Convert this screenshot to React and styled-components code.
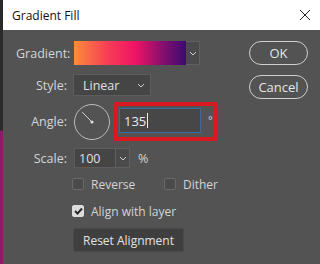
import styled, { createGlobalStyle } from "styled-components";

const Global = createGlobalStyle`
  html, body {
    margin: 0;
    padding: 0;
    background: #2b2b2b;
    font-family: "Open Sans", "Noto Sans", sans-serif;
  }
`;

const Page = styled.div`
  display: flex;
  width: 320px;
  height: 264px;
  overflow: hidden;
`;

const Strip = styled.div`
  width: 3px;
  flex-shrink: 0;
  background: linear-gradient(#2a2a2a 0, #2a2a2a 130px, #8a1a6a 131px, #8a1a6a 100%);
`;

const Dialog = styled.div`
  flex: 1;
  display: flex;
  flex-direction: column;
  background: #535353;
`;

const TitleBar = styled.div`
  height: 30px;
  background: #ffffff;
  display: flex;
  align-items: center;
  justify-content: space-between;
  padding: 0 9px 0 9px;
  color: #111;
  font-size: 12px;
`;

const Body = styled.div`
  display: flex;
  padding: 11px 12px 0 13px;
`;

const Form = styled.div`
  flex: 1;
  display: flex;
  flex-direction: column;
`;

const Row = styled.div`
  display: flex;
  align-items: center;
  height: ${(p) => p.$h}px;
  margin-top: ${(p) => p.$mt || 0}px;
`;

const Label = styled.span`
  width: 51px;
  flex-shrink: 0;
  margin-right: 6px;
  text-align: right;
  color: #d4d4d4;
  font-size: 12.5px;
`;

const Indent = styled.div`
  width: 56px;
  flex-shrink: 0;
`;

const Swatch = styled.div`
  width: 112px;
  height: 24px;
  margin-left: 1px;
  background: linear-gradient(90deg, #fb8d3b 0%, #f73d55 30%, #ee1365 55%, #8b0f6d 78%, #3b0a72 100%);
`;

const ArrowBox = styled.div`
  width: ${(p) => p.$w || 14}px;
  height: 100%;
  box-sizing: border-box;
  display: flex;
  align-items: center;
  justify-content: center;
  background: #4a4a4a;
  border: 1px solid #5f5f5f;
  border-left: ${(p) => (p.$split ? "1px solid #5f5f5f" : "none")};
`;

const Select = styled.div`
  width: 78px;
  height: 22px;
  box-sizing: border-box;
  display: flex;
  align-items: center;
  justify-content: space-between;
  padding: 0 5px 0 9px;
  background: #454545;
  border: 1px solid #5c5c5c;
  color: #e0e0e0;
  font-size: 12.5px;
`;

const Dial = styled.div`
  width: 36px;
  height: 36px;
  margin-left: 1px;
  flex-shrink: 0;
`;

const Highlight = styled.div`
  margin-left: 4px;
  display: flex;
  align-items: flex-start;
  box-sizing: border-box;
  width: 103px;
  height: 39px;
  border: 4px solid #d8191f;
  padding: 2px 0 0 1px;
`;

const AngleInput = styled.div`
  width: 82px;
  height: 25px;
  box-sizing: border-box;
  border: 1px solid #3d6a9e;
  background: #474747;
  display: flex;
  align-items: center;
  padding-left: 4px;
  color: #ececec;
  font-size: 13px;
`;

const Caret = styled.span`
  display: inline-block;
  width: 1px;
  height: 15px;
  background: #ececec;
  margin-left: 1px;
`;

const Degree = styled.span`
  margin: 4px 0 0 7px;
  color: #d4d4d4;
  font-size: 11px;
`;

const Combo = styled.div`
  display: flex;
  height: 20px;
  margin-left: 1px;
`;

const ComboText = styled.div`
  width: 41px;
  box-sizing: border-box;
  background: #454545;
  border: 1px solid #5c5c5c;
  border-right: none;
  display: flex;
  align-items: center;
  padding-left: 4px;
  color: #e0e0e0;
  font-size: 12.5px;
`;

const Unit = styled.span`
  margin-left: 8px;
  color: #d4d4d4;
  font-size: 12.5px;
`;

const Check = styled.div`
  display: flex;
  align-items: center;
  flex-shrink: 0;
  gap: 7px;
  width: ${(p) => (p.$w ? `${p.$w}px` : "auto")};
  color: #d4d4d4;
  font-size: 12px;
`;

const Box = styled.span`
  width: 12px;
  height: 12px;
  box-sizing: border-box;
  border-radius: 2px;
  display: flex;
  align-items: center;
  justify-content: center;
  background: ${(p) => (p.$on ? "#dcdcdc" : "#4b4b4b")};
  border: 1px solid ${(p) => (p.$on ? "#dcdcdc" : "#6a6a6a")};
`;

const ResetButton = styled.button`
  margin-left: 1px;
  width: 111px;
  height: 24px;
  border: 1px solid #4a4a4a;
  border-radius: 2px;
  background: #3f3f3f;
  color: #e2e2e2;
  font-family: inherit;
  font-size: 12px;
  padding: 0;
`;

const Side = styled.div`
  display: flex;
  flex-direction: column;
  gap: 10px;
`;

const PillButton = styled.button`
  width: 59px;
  height: 24px;
  box-sizing: border-box;
  border: 1.5px solid #cfcfcf;
  border-radius: 12px;
  background: #535353;
  color: #e6e6e6;
  font-family: inherit;
  font-size: 13px;
  padding: 0;
`;

const Chevron = () => (
  <svg width="8" height="5" viewBox="0 0 8 5">
    <path d="M1 1 L4 4 L7 1" fill="none" stroke="#cfcfcf" strokeWidth="1" />
  </svg>
);

const CloseIcon = () => (
  <svg width="12" height="12" viewBox="0 0 12 12">
    <path d="M1 1 L11 11 M11 1 L1 11" stroke="#222" strokeWidth="1" />
  </svg>
);

const CheckMark = () => (
  <svg width="9" height="8" viewBox="0 0 9 8">
    <path d="M1 4 L3.5 6.5 L8 1.5" fill="none" stroke="#2a2a2a" strokeWidth="2" />
  </svg>
);

const AngleDial = ({ angle }) => {
  const r = (angle * Math.PI) / 180;
  const x = 18 + Math.cos(r) * 14;
  const y = 18 - Math.sin(r) * 14;
  return (
    <Dial>
      <svg width="36" height="36" viewBox="0 0 36 36">
        <circle cx="18" cy="18" r="17.5" fill="none" stroke="#bdbdbd" strokeWidth="1" />
        <line x1="18" y1="18" x2={x} y2={y} stroke="#cfcfcf" strokeWidth="1" />
        <circle cx="18" cy="18" r="1.6" fill="#dcdcdc" />
      </svg>
    </Dial>
  );
};

const App = () => {
  return (
    <Page>
      <Global />
      <Strip />
      <Dialog>
        <TitleBar>
          <span>Gradient Fill</span>
          <CloseIcon />
        </TitleBar>
        <Body>
          <Form>
            <Row $h={24}>
              <Label>Gradient:</Label>
              <Swatch />
              <ArrowBox>
                <Chevron />
              </ArrowBox>
            </Row>
            <Row $h={22} $mt={9}>
              <Label>Style:</Label>
              <Select>
                Linear
                <Chevron />
              </Select>
            </Row>
            <Row $h={39} $mt={6}>
              <Label>Angle:</Label>
              <AngleDial angle={135} />
              <Highlight>
                <AngleInput>
                  135
                  <Caret />
                </AngleInput>
                <Degree>°</Degree>
              </Highlight>
            </Row>
            <Row $h={20} $mt={7}>
              <Label>Scale:</Label>
              <Combo>
                <ComboText>100</ComboText>
                <ArrowBox $w={15} $split>
                  <Chevron />
                </ArrowBox>
              </Combo>
              <Unit>%</Unit>
            </Row>
            <Row $h={14} $mt={9}>
              <Indent />
              <Check $w={92}>
                <Box />
                Reverse
              </Check>
              <Check>
                <Box />
                Dither
              </Check>
            </Row>
            <Row $h={14} $mt={13}>
              <Indent />
              <Check>
                <Box $on>
                  <CheckMark />
                </Box>
                Align with layer
              </Check>
            </Row>
            <Row $h={24} $mt={10}>
              <Indent />
              <ResetButton>Reset Alignment</ResetButton>
            </Row>
          </Form>
          <Side>
            <PillButton>OK</PillButton>
            <PillButton>Cancel</PillButton>
          </Side>
        </Body>
      </Dialog>
    </Page>
  );
};

export default App;
